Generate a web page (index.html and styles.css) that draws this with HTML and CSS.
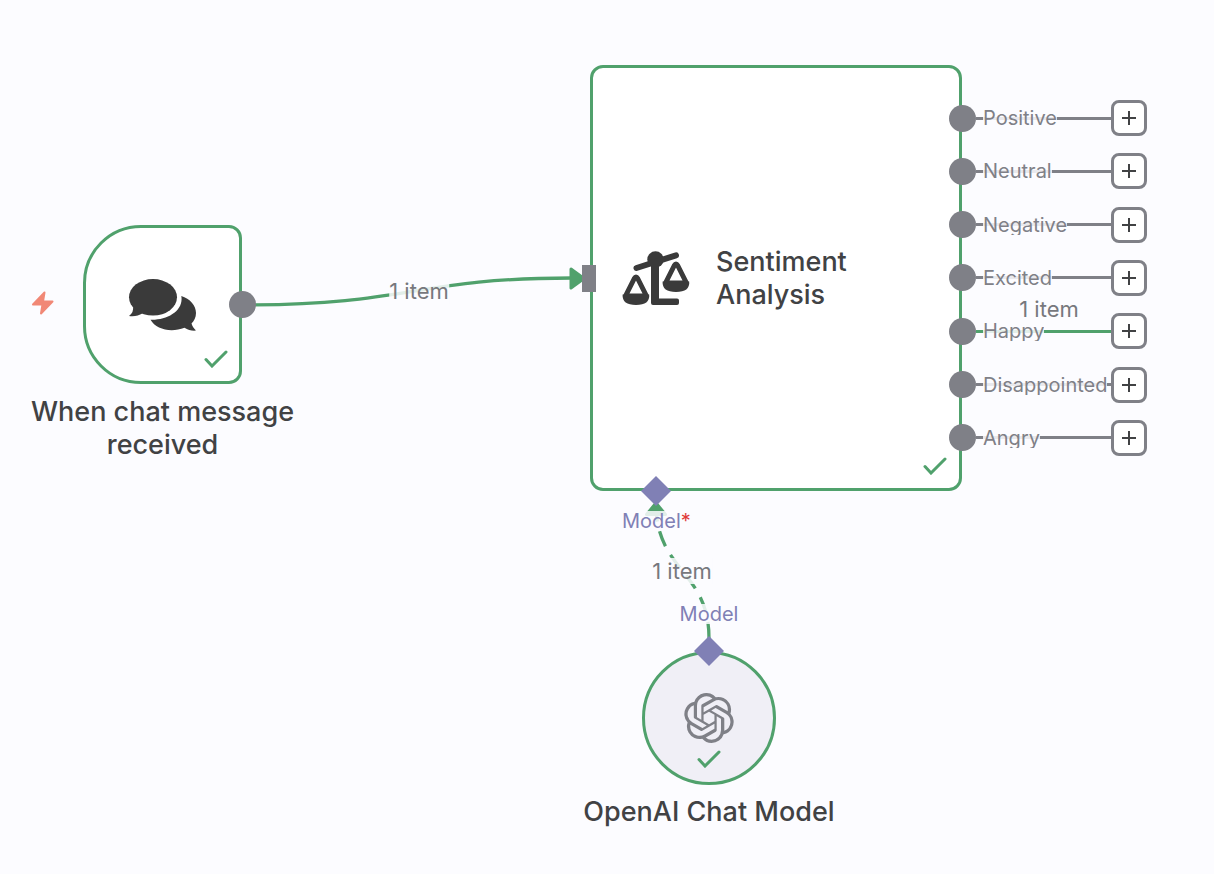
FILE: index.html
```html
<!DOCTYPE html>
<html lang="en">
<head>
<meta charset="utf-8">
<title>Workflow canvas</title>
<link rel="stylesheet" href="styles.css">
</head>
<body>
<main class="canvas">
  <svg class="edges" aria-hidden="true">
    <path class="edge" d="M243 305C413 305 413 278 572 278"/>
    <path class="arrow" d="M571 269L584 278.500L571 288Z"/>
    <path class="edge edge-dashed" d="M709 638C709 571 656 571 656 504"/>
    <path class="arrow" d="M656 503L665.500 514.500H646.500Z"/>
  </svg>
  <span class="edge-label edge-label-main">1 item</span>
  <span class="edge-label edge-label-model">1 item</span>

  <section class="node trigger">
    <svg class="bolt" viewBox="30 290 26 26" aria-hidden="true"><path d="M44.500 292.500L33 304.500H42.500L41 313.500L52.500 301.500H43Z"/></svg>
    <svg class="icon-chat" viewBox="128 278 70 54" aria-hidden="true">
      <ellipse cx="153" cy="297.300" rx="24" ry="18.300"/>
      <path d="M133 307Q134 312 129 316Q137 317 142.500 313.200Z"/>
      <path d="M181.300 296C190 298.500 196 305.500 196 313C196 317.500 194 321 191.500 323.500C192.500 327 194 328.500 196 330.600C192 331 188 330 184.500 327.800C171 333 156 329.500 150.500 319.800C167 320.500 184 311 181.300 296Z"/>
    </svg>
    <svg class="check" viewBox="0 0 24 18" aria-hidden="true"><path d="M2 9.500L8 16L22 2"/></svg>
    <span class="dot"></span>
    <h2 class="title">When chat message received</h2>
  </section>

  <section class="node sentiment">
    <svg class="icon-scale" viewBox="621 249 70 58" aria-hidden="true">
      <circle cx="655.500" cy="259.500" r="8.200"/>
      <path class="beam" d="M636.500 268L676 255.300"/>
      <path d="M651 260H659V298.500H677Q679 298.500 679 300.500V303Q679 305 677 305H653Q651 305 651 303Z"/>
      <path class="cord" d="M625.500 296L634.300 278.500Q636 275.500 637.700 278.500L646.500 296Z"/>
      <path d="M622.600 294.500H649.200Q650 305 636 305Q622 305 622.600 294.500Z"/>
      <path class="cord" d="M665.500 283L674.300 265.500Q676 262.500 677.700 265.500L686.500 283Z"/>
      <path d="M662.600 281.500H689.200Q690 292 676 292Q662 292 662.600 281.500Z"/>
    </svg>
    <h2 class="title">Sentiment Analysis</h2>
    <svg class="check" viewBox="0 0 24 18" aria-hidden="true"><path d="M2 9.500L8 16L22 2"/></svg>
    <span class="input-port"></span>
    <span class="diamond"></span>
    <span class="model-label model-input">Model<span class="required">*</span></span>
    <ul class="outputs">
      <li class="output"><span class="dot"></span><span class="wire"><span class="output-label">Positive</span></span><button class="add" aria-label="Add after Positive"><svg viewBox="0 0 16 16"><path d="M8 1V15M1 8H15"/></svg></button></li>
      <li class="output"><span class="dot"></span><span class="wire"><span class="output-label">Neutral</span></span><button class="add" aria-label="Add after Neutral"><svg viewBox="0 0 16 16"><path d="M8 1V15M1 8H15"/></svg></button></li>
      <li class="output"><span class="dot"></span><span class="wire"><span class="output-label">Negative</span></span><button class="add" aria-label="Add after Negative"><svg viewBox="0 0 16 16"><path d="M8 1V15M1 8H15"/></svg></button></li>
      <li class="output"><span class="dot"></span><span class="wire"><span class="output-label">Excited</span></span><button class="add" aria-label="Add after Excited"><svg viewBox="0 0 16 16"><path d="M8 1V15M1 8H15"/></svg></button></li>
      <li class="output"><span class="dot"></span><span class="wire wire-success"><span class="output-label">Happy</span><span class="run-count">1 item</span></span><button class="add" aria-label="Add after Happy"><svg viewBox="0 0 16 16"><path d="M8 1V15M1 8H15"/></svg></button></li>
      <li class="output"><span class="dot"></span><span class="wire"><span class="output-label">Disappointed</span></span><button class="add" aria-label="Add after Disappointed"><svg viewBox="0 0 16 16"><path d="M8 1V15M1 8H15"/></svg></button></li>
      <li class="output"><span class="dot"></span><span class="wire"><span class="output-label">Angry</span></span><button class="add" aria-label="Add after Angry"><svg viewBox="0 0 16 16"><path d="M8 1V15M1 8H15"/></svg></button></li>
    </ul>
  </section>

  <section class="node openai">
    <svg class="icon-openai" viewBox="0 0 24 24" aria-hidden="true"><path d="M22.2819 9.8211a5.9847 5.9847 0 0 0-.5157-4.9108 6.0462 6.0462 0 0 0-6.5098-2.9A6.0651 6.0651 0 0 0 4.9807 4.1818a5.9847 5.9847 0 0 0-3.9977 2.9 6.0462 6.0462 0 0 0 .7427 7.0966 5.98 5.98 0 0 0 .511 4.9107 6.051 6.051 0 0 0 6.5146 2.9001A5.9847 5.9847 0 0 0 13.2599 24a6.0557 6.0557 0 0 0 5.7718-4.2058 5.9894 5.9894 0 0 0 3.9977-2.9001 6.0557 6.0557 0 0 0-.7475-7.0729zm-9.022 12.6081a4.4755 4.4755 0 0 1-2.8764-1.0408l.1419-.0804 4.7783-2.7582a.7948.7948 0 0 0 .3927-.6813v-6.7369l2.02 1.1686a.071.071 0 0 1 .038.052v5.5826a4.504 4.504 0 0 1-4.4945 4.4944zm-9.6607-4.1254a4.4708 4.4708 0 0 1-.5346-3.0137l.142.0852 4.783 2.7582a.7712.7712 0 0 0 .7806 0l5.8428-3.3685v2.3324a.0804.0804 0 0 1-.0332.0615L9.74 19.9502a4.4992 4.4992 0 0 1-6.1408-1.6464zM2.3408 7.8956a4.485 4.485 0 0 1 2.3655-1.9728V11.6a.7664.7664 0 0 0 .3879.6765l5.8144 3.3543-2.0201 1.1685a.0757.0757 0 0 1-.071 0l-4.8303-2.7865A4.504 4.504 0 0 1 2.3408 7.872zm16.5963 3.8558L13.1038 8.364 15.1192 7.2a.0757.0757 0 0 1 .071 0l4.8303 2.7913a4.4944 4.4944 0 0 1-.6765 8.1042v-5.6772a.79.79 0 0 0-.407-.667zm2.0107-3.0231l-.142-.0852-4.7735-2.7818a.7759.7759 0 0 0-.7854 0L9.409 9.2297V6.8974a.0662.0662 0 0 1 .0284-.0615l4.8303-2.7866a4.4992 4.4992 0 0 1 6.6802 4.66zM8.3065 12.863l-2.02-1.1638a.0804.0804 0 0 1-.038-.0567V6.0742a4.4992 4.4992 0 0 1 7.3757-3.4537l-.142.0805L8.704 5.459a.7948.7948 0 0 0-.3927.6813zm1.0976-2.3654l2.602-1.4998 2.6069 1.4998v2.9994l-2.5974 1.4997-2.6067-1.4997Z"/></svg>
    <svg class="check" viewBox="0 0 24 18" aria-hidden="true"><path d="M2 9.500L8 16L22 2"/></svg>
    <span class="diamond"></span>
    <span class="model-label model-output">Model</span>
    <h2 class="title">OpenAI Chat Model</h2>
  </section>
</main>
</body>
</html>
```
FILE: styles.css
```css
:root {
  --canvas: #fcfcff;
  --label-bg: rgba(252, 252, 255, 0.85);
  --green: #50a16c;
  --grey: #7f8087;
  --ink: #414244;
  --icon: #3a3a3a;
  --purple: #8080b5;
}

* {
  box-sizing: border-box;
}

body {
  margin: 0;
  background: var(--canvas);
  color: var(--ink);
  font-family: Inter, "Liberation Sans", sans-serif;
}

.canvas {
  position: relative;
  min-height: 100vh;
  overflow: hidden;
}

svg {
  display: block;
}

.edges {
  position: absolute;
  inset: 0;
  width: 100%;
  height: 100%;
}

.edge {
  fill: none;
  stroke: var(--green);
  stroke-width: 3.3;
}

.edge-dashed {
  stroke-dasharray: 16 10;
}

.arrow {
  fill: var(--green);
  stroke: var(--green);
  stroke-width: 3;
  stroke-linejoin: round;
}

.edge-label,
.run-count {
  position: absolute;
  transform: translate(-50%, -50%);
  font-size: 22px;
  line-height: 26px;
  white-space: nowrap;
  color: #77787d;
}

.edge-label {
  background: var(--label-bg);
}

.edge-label-main {
  left: 419px;
  top: 291px;
}

.edge-label-model {
  left: 682px;
  top: 571px;
}

.node {
  position: absolute;
  display: flex;
  align-items: center;
  justify-content: center;
  background: #fff;
  border: 3px solid var(--green);
}

.title {
  margin: 0;
  font-size: 27px;
  font-weight: 450;
  line-height: 33px;
}

.check {
  position: absolute;
  width: 24px;
  height: 18px;
  fill: none;
  stroke: var(--green);
  stroke-width: 3;
  stroke-linecap: round;
}

.dot {
  flex: none;
  width: 27px;
  height: 27px;
  border-radius: 50%;
  background: var(--grey);
}

.trigger {
  left: 83px;
  top: 225px;
  width: 159px;
  height: 159px;
  border-radius: 58px 13px 13px 58px;
}

.trigger .dot {
  position: absolute;
  right: -17px;
}

.trigger .title,
.openai .title {
  position: absolute;
  top: 100%;
  left: 50%;
  width: 280px;
  margin-top: 14px;
  text-align: center;
  transform: translateX(-50%);
}

.trigger .check {
  right: 11px;
  bottom: 13px;
}

.bolt {
  position: absolute;
  right: 100%;
  bottom: 65px;
  width: 26px;
  margin-right: 30px;
  fill: #f18876;
  stroke: #f18876;
  stroke-width: 2;
  stroke-linejoin: round;
}

.icon-chat {
  width: 70px;
  fill: var(--icon);
}

.sentiment {
  left: 590px;
  top: 65px;
  width: 372px;
  height: 426px;
  padding: 0 28px;
  gap: 25px;
  justify-content: flex-start;
  border-radius: 13px;
}

.sentiment .check {
  right: 12px;
  bottom: 13px;
}

.icon-scale {
  flex: none;
  width: 70px;
  fill: var(--icon);
}

.icon-scale .beam {
  stroke: var(--icon);
  stroke-width: 6;
  stroke-linecap: round;
}

.icon-scale .cord {
  fill: none;
  stroke: var(--icon);
  stroke-width: 5;
  stroke-linejoin: round;
}

.input-port {
  position: absolute;
  left: -11px;
  width: 14px;
  height: 27px;
  background: var(--grey);
}

.diamond {
  position: absolute;
  width: 30px;
  height: 30px;
  background: var(--purple);
  clip-path: polygon(50% 0, 100% 50%, 50% 100%, 0 50%);
}

.sentiment .diamond {
  left: 48px;
  bottom: -18px;
}

.model-label {
  position: absolute;
  font-size: 20px;
  line-height: 20px;
  color: var(--purple);
  background: var(--label-bg);
}

.model-input {
  left: 29px;
  top: 100%;
  margin-top: 23px;
}

.required {
  color: #e03a3a;
}

.outputs {
  position: absolute;
  left: 356px;
  top: 32px;
  display: flex;
  flex-direction: column;
  justify-content: space-between;
  width: 198px;
  height: 356px;
  margin: 0;
  padding: 0;
  list-style: none;
}

.output {
  display: flex;
  align-items: center;
}

.wire {
  position: relative;
  display: flex;
  flex: 1;
  padding-left: 7px;
  background: linear-gradient(var(--grey), var(--grey)) center / 100% 3px no-repeat;
}

.wire-success {
  background-image: linear-gradient(var(--green), var(--green));
}

.output-label {
  overflow: hidden;
  font-size: 20px;
  line-height: 20px;
  color: var(--grey);
  background: var(--label-bg);
}

.run-count {
  left: 73px;
  top: -12px;
}

.add {
  display: grid;
  place-items: center;
  flex: none;
  width: 36px;
  height: 36px;
  padding: 0;
  border: 3px solid var(--grey);
  border-radius: 8px;
  background: #fff;
}

.add svg {
  width: 16px;
  fill: none;
  stroke: #414244;
  stroke-width: 2;
}

.openai {
  left: 642px;
  top: 651px;
  width: 134px;
  height: 134px;
  border-radius: 50%;
  background: #f0eff6;
}

.icon-openai {
  width: 50px;
  fill: var(--grey);
}

.openai .check {
  bottom: 14px;
}

.openai .diamond {
  top: -18px;
}

.model-output {
  bottom: 100%;
  margin-bottom: 30px;
}

.openai .title {
  margin-top: 13px;
}
```
